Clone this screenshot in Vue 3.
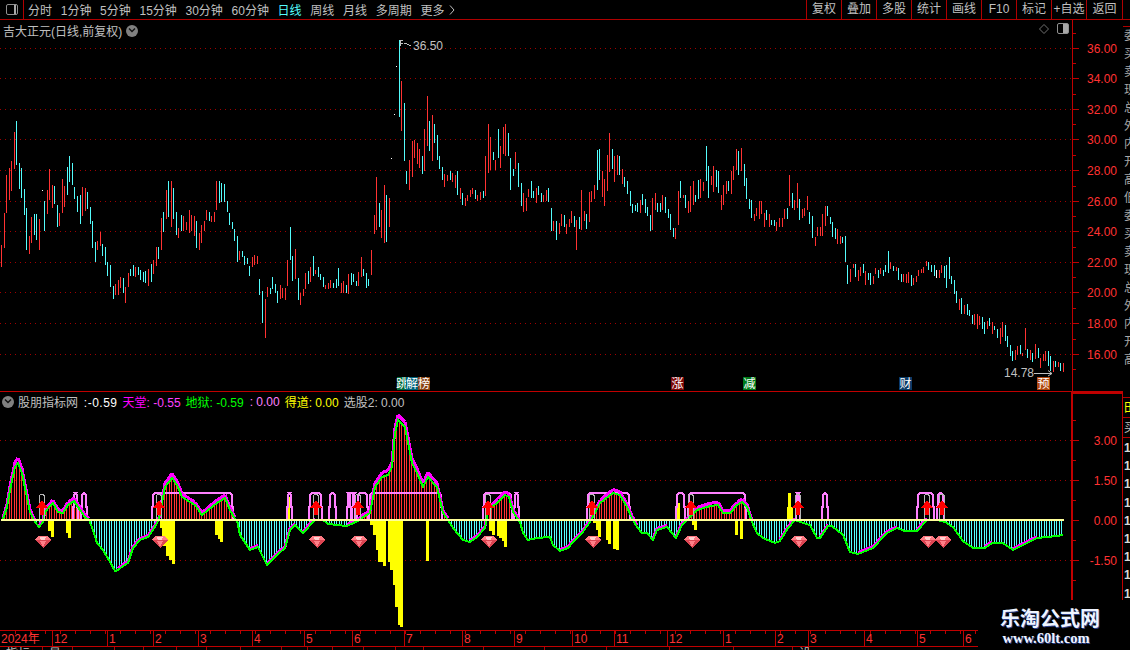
<template>
  <div class="terminal">
    <header class="toolbar">
      <div class="toggle-cell"><span class="panel-icon" /></div>
      <nav class="periods">
        <span v-for="p in periods" :key="p" :class="{ active: p === '日线' }">{{ p }}</span>
        <span class="more">更多 <svg width="6" height="10" viewBox="0 0 6 10"><path d="M1 0.5 L5 5 L1 9.5" fill="none" stroke="#c0c0c0" /></svg></span>
      </nav>
      <nav class="actions">
        <span v-for="a in actions" :key="a">{{ a }}</span>
      </nav>
    </header>

    <div class="workspace">
      <div class="charts">
        <section class="pane price-pane">
          <svg width="1123" height="372" viewBox="0 20 1123 372">
            <g shape-rendering="crispEdges">
              <line v-for="g in priceGrid" :key="g.y" x1="0" x2="1072" :y1="g.y + 0.5" :y2="g.y + 0.5" class="dots" />
              <path :d="barPath('r')" stroke="#ff3232" fill="none" />
              <path :d="barPath('c')" stroke="#54fcfc" fill="none" />
              <path :d="barPath('w')" stroke="#ffffff" fill="none" />
              <rect v-for="d in whiteDots" :key="d[0]" :x="d[0]" :y="d[1]" width="1" height="1" fill="#fff" />
              <line x1="1072.5" x2="1072.5" y1="20" y2="392" class="axis" />
              <line x1="0" x2="1123" y1="391.5" y2="391.5" class="axis" />
              <line v-for="g in priceGrid" :key="'t' + g.y" x1="1073" x2="1079" :y1="g.y + 0.5" :y2="g.y + 0.5" class="axis" />
              <line v-for="g in priceMinor" :key="'m' + g" x1="1073" x2="1076" :y1="g + 0.5" :y2="g + 0.5" class="axis" />
            </g>
            <text v-for="g in priceGrid" :key="'l' + g.y" x="1117" :y="g.y + 5" class="axis-label">{{ g.label }}</text>

            <path d="M400 46 V40 H403 M400 43 H403 M404 43 L407 44 L411 46" fill="none" stroke="#c0c0c0" shape-rendering="crispEdges" />
            <text x="413" y="50" class="note">36.50</text>
            <text x="1004" y="377" class="note">14.78</text>
            <path d="M1034 373.5 H1052 M1048 370.5 L1052 373.5 L1048 376" fill="none" stroke="#c0c0c0" />

            <g v-for="t in tags" :key="t.text + t.x">
              <rect :x="t.x" y="377" :width="t.w" height="13" :fill="t.bg" />
              <text :x="t.x + t.w / 2" y="388" class="tag">{{ t.text }}</text>
            </g>
          </svg>
          <div class="pane-title">
            <span>吉大正元(日线,前复权)</span>
            <span class="fold"><svg width="8" height="5" viewBox="0 0 8 5"><path d="M1 0.5 L4 3.5 L7 0.5" fill="none" stroke="#111" stroke-width="1.4" /></svg></span>
          </div>
          <div class="pane-tools">
            <svg width="10" height="10" viewBox="0 0 10 10"><path d="M5 0.5 L9.5 5 L5 9.5 L0.5 5 Z" fill="none" stroke="#707070" /></svg>
            <span class="panel-icon mirrored" />
          </div>
        </section>

        <section class="pane index-pane">
          <svg width="1123" height="238" viewBox="0 392 1123 238">
            <g shape-rendering="crispEdges">
              <line v-for="g in indexGrid" :key="g.y" x1="0" x2="1072" :y1="g.y + 0.5" :y2="g.y + 0.5" class="dots" />
              <rect v-for="(b, i) in yellowBars" :key="i" :x="b[0]" :y="Math.min(b[2], 520)" :width="b[1] - b[0]" :height="Math.abs(b[2] - 520)" fill="#ffff00" />
              <path :d="stickPath.up" stroke="#ff3232" fill="none" />
              <path :d="stickPath.down" stroke="#54fcfc" fill="none" />
              <polyline v-for="(d, i) in pillarLines" :key="i" :points="d" fill="none" stroke="#ff80ff" stroke-width="2" />
              <path :d="heavenPath" fill="none" stroke="#ff00ff" stroke-width="3" />
              <polyline :points="earthLine" fill="none" stroke="#00ff00" stroke-width="2" />
              <g v-for="x in signals" :key="'s' + x" :transform="`translate(${x} 0)`">
                <path d="M-2.5 519 V496 L-1 494 H1 L2.5 496 V519" fill="none" stroke="#b8b8b8" />
                <path d="M0 500 L6 508 H2 V515 H-2 V508 H-6 Z" fill="#ff0000" />
              </g>
              <rect x="1" y="519" width="1063" height="2" fill="#ffff99" />
              <line x1="1072" x2="1072" y1="392" y2="600" class="axis" stroke-width="2.5" />
              <line x1="1072" x2="1123" y1="393" y2="393" class="axis" stroke-width="2" />
              <line x1="1122.5" x2="1122.5" y1="392" y2="600" class="axis" stroke-width="2" />
              <line v-for="g in indexTicks" :key="'t' + g" x1="1073" x2="1079" :y1="g + 0.5" :y2="g + 0.5" class="axis" />
              <line v-for="g in indexMinor" :key="'m' + g" x1="1073" x2="1076" :y1="g + 0.5" :y2="g + 0.5" class="axis" />
            </g>
            <g v-for="x in signals" :key="'g' + x" :transform="`translate(${x + 1} 536)`" shape-rendering="crispEdges">
              <path d="M-5 0 H5 L8 4 L0 12 L-8 4 Z" fill="#dc4552" />
              <path d="M-5 0 H5 L8 4 H-8 Z" fill="#ff7a84" />
              <path d="M-3 1 H3 L2 4 H-2 Z" fill="#ffd0d0" />
              <path d="M-3 5 H3 L0 11 Z" fill="#ff8088" />
            </g>
            <text v-for="g in indexGrid" :key="'l' + g.y" x="1117" :y="g.y + 5" class="axis-label">{{ g.label }}</text>
            <text x="1117" y="525" class="axis-label">0.00</text>
          </svg>
          <div class="legend">
            <span class="fold"><svg width="8" height="5" viewBox="0 0 8 5"><path d="M1 0.5 L4 3.5 L7 0.5" fill="none" stroke="#111" stroke-width="1.4" /></svg></span>
            <span class="item grey">股朋指标网<b class="white first"> :-0.59</b></span>
            <span class="item magenta">天堂<b>: -0.55</b></span>
            <span class="item green">地狱<b>: -0.59</b></span>
            <span class="item pink"><b>: 0.00</b></span>
            <span class="item yellow">得道<b>: 0.00</b></span>
            <span class="item grey">选股2<b>: 0.00</b></span>
          </div>
        </section>
      </div>

      <aside class="side">
        <div class="side-gap" />
        <div class="side-quotes">
          <span v-for="(q, i) in sideWords" :key="i">{{ q }}</span>
        </div>
        <div class="side-box yellow">田</div>
        <div class="side-box">买</div>
        <div class="side-values">
          <span v-for="n in 9" :key="n">1</span>
        </div>
      </aside>
    </div>

    <svg class="dates" width="1130" height="17" viewBox="0 630 1130 17">
      <g shape-rendering="crispEdges">
        <line x1="0" x2="978" y1="630.5" y2="630.5" class="axis" />
        <line x1="0" x2="978" y1="646.5" y2="646.5" class="axis" />
        <line v-for="x in dateMinor" :key="x" :x1="x + 0.5" :x2="x + 0.5" y1="631" y2="634" class="axis" />
        <line v-for="m in months" :key="m.x" :x1="m.x + 0.5" :x2="m.x + 0.5" y1="631" y2="646" class="axis" />
      </g>
      <text x="1" y="643" class="date-label">2024年</text>
      <text v-for="m in months" :key="'d' + m.x" :x="m.x + 2" y="643" class="date-label">{{ m.label }}</text>
    </svg>

    <div class="tabs">
      <span v-for="t in tabs" :key="t.w" :style="{ width: t.w + 'px' }">{{ t.text }}</span>
    </div>

    <div class="watermark">
      <strong>乐淘公式网</strong>
      <em>www.60lt.com</em>
    </div>
  </div>
</template>

<script setup>
const periods = ['分时', '1分钟', '5分钟', '15分钟', '30分钟', '60分钟', '日线', '周线', '月线', '多周期']
const actions = ['复权', '叠加', '多股', '统计', '画线', 'F10', '标记', '+自选', '返回']

const priceYs = [48, 78, 109, 139, 170, 201, 231, 262, 292, 323, 354]
const priceGrid = priceYs.map((y, i) => ({ y, label: (36 - i * 2).toFixed(2) }))
const priceMinor = [33, ...priceYs.slice(0, -1).map((y, i) => Math.round((y + priceYs[i + 1]) / 2)), 369]

const indexGrid = [
  { y: 440, label: '3.00' },
  { y: 480, label: '1.50' },
  { y: 560, label: '-1.50' }
]
const indexTicks = [440, 480, 520, 560]
const indexMinor = [420, 460, 500, 540, 580]

const whiteDots = [[42, 190], [391, 158], [394, 114], [396, 66]]

const tags = [
  { text: '跳', x: 397, w: 10, bg: '#006a3c' },
  { text: '解', x: 406, w: 12, bg: '#00627a' },
  { text: '榜', x: 418, w: 12, bg: '#8a4212' },
  { text: '涨', x: 671, w: 13, bg: '#7c0808' },
  { text: '减', x: 743, w: 13, bg: '#007a1a' },
  { text: '财', x: 899, w: 13, bg: '#0a3a66' },
  { text: '预', x: 1037, w: 13, bg: '#b0470f' }
]

// 按截图读出的K线: 竖线位置,上沿,下沿,颜色 (坐标为放大3倍后的值)
const section = (ox, oy, text) =>
  text.trim().split(/\s+/).map((t) => {
    const [v, top, bottom, c] = t.split(',')
    return { x: Math.floor(ox + v / 3), top: Math.round(oy + top / 3), bottom: Math.round(oy + bottom / 3), c }
  })

const bars = [
  ...section(0, 100, `3,435,500,r 12,339,443,r 18,225,338,r 27,204,300,r 33,183,272,r 42,96,207,r 48,63,195,c 57,189,267,c 63,204,293,c 72,267,344,c
    78,324,450,c 87,408,462,r 93,351,429,r 102,342,405,c 108,342,420,c 117,357,450,r 132,303,393,c 141,270,342,r 147,207,300,r 156,255,324,r
    162,258,312,c 171,315,381,c 177,339,378,r 186,237,339,r 192,258,321,r 201,201,285,c 207,168,246,c 216,189,255,c 222,261,297,c 231,288,336,c
    240,285,372,c 246,261,348,r 255,264,333,r 261,276,327,c 270,321,372,c 276,363,444,c 285,426,486,c 291,423,450,r 300,396,438,r 306,432,468,c
    315,441,495,c 321,486,528,c 330,495,561,c 339,558,597,c 345,552,585,r 354,540,585,r 360,531,564,r 369,534,579,c 375,561,609,r 384,519,561,r
    390,507,528,c 399,495,528,c 405,501,531,r 414,501,525,c 420,510,540,c 429,516,546,c 435,513,549,c 444,507,558,r 453,492,546,c 459,480,522,r
    468,441,498,r 474,441,477,c 483,354,450,r 489,336,396,c 498,270,357,r 504,243,351,c 513,243,381,r 519,264,357,c 528,336,405,c 534,384,414,r
    543,345,393,c 549,348,393,r 558,366,390,r 567,330,399,r 573,345,393,r 582,348,408,r 588,363,444,c 597,399,450,r 603,375,429,r 612,363,393,r
    618,330,360,r 627,336,363,c 633,348,366,r 642,336,366,r 648,243,330,r 657,243,309,c 663,249,306,c 672,252,306,c 681,303,336,c 687,339,375,c
    696,366,387,c 702,387,423,c 711,408,486,c 717,453,480,r 726,453,471,c 732,468,495,c 741,474,492,c 747,498,528,c 756,471,501,r 762,465,495,r
    771,468,492,r 777,537,585,c 786,573,669,c 795,597,714,r 801,561,591,r 810,564,582,c 816,531,567,c 825,552,579,c 831,573,609,c 840,555,597,r
    846,564,594,r 855,564,600,r 861,480,558,r 870,381,480,c 876,468,543,c 885,447,537,r 894,534,600,c`),
  ...section(290, 220, `31,219,255,r 39,207,228,r 46,159,207,r 54,153,192,c 61,141,186,r 69,108,168,c 76,150,162,r 85,141,171,c 91,162,180,c 100,171,201,c
    106,195,207,r 115,189,207,r 121,180,204,r 130,189,204,c 139,177,204,c 145,144,198,c 154,189,219,r 160,183,219,r 169,195,219,c 175,162,222,r
    184,159,195,c 190,162,186,c 199,183,198,c 205,156,198,r 214,111,171,r 220,147,168,c 229,159,204,c 235,177,198,c`),
  ...section(350, 30, `64,660,735,r 72,555,612,r 79,441,600,r 87,519,591,c 94,540,624,r 102,465,639,r 109,495,636,c 118,504,591,r 148,30,261,c 154,153,303,r
    163,219,393,c 169,423,462,c 178,390,480,r 187,333,441,r 193,330,384,r 202,339,402,r 208,357,414,r 217,378,432,c 223,297,423,r 232,198,348,r
    238,273,363,c 247,255,393,r 253,282,339,c 262,315,390,c 268,378,417,c 277,411,450,c 283,432,471,r 292,435,453,r 301,423,450,c 307,429,456,r
    316,435,474,r 322,423,495,c 331,474,507,r 337,489,525,c 346,504,528,r 352,495,513,r 361,480,501,r 367,474,492,r 376,480,507,c 382,495,513,r
    391,486,510,r 400,483,504,c 406,378,498,r 415,282,429,r 421,321,420,r 430,366,390,c 436,390,420,r 445,297,384,c 451,348,414,r 460,291,372,r
    466,282,378,r 475,309,378,c 481,384,480,c 490,417,438,c 496,366,417,r 505,399,471,c 514,459,528,c 520,489,546,r 529,504,543,r 535,477,501,r
    544,453,504,c 550,483,504,c 559,474,519,r 565,468,495,c 574,489,516,c 580,495,516,r 589,480,513,r 595,474,516,c 604,534,603,c 610,573,603,r
    619,573,630,c 628,579,612,r 634,552,588,r 643,555,591,c 649,582,612,r 658,567,591,r 664,543,579,r 673,558,591,c 679,570,660,r 688,561,597,c
    694,480,600,r 703,543,573,r 709,552,597,c 718,486,576,r 724,483,516,r 733,465,507,r 742,360,480,c 748,357,450,c 757,423,501,r 763,447,528,r
    772,375,483,r 778,309,426,r 787,357,417,c 793,378,456,r 802,375,435,r 808,378,435,c 817,417,462,r 823,441,471,c 832,453,492,c 841,483,528,c
    847,522,549,c 856,525,543,c 862,519,546,c 871,510,549,r 877,492,525,c 886,507,549,c 892,531,558,c`),
  ...section(640, 130, `30,255,303,c 37,204,300,r 46,189,240,r 52,219,246,c 61,219,246,c 67,195,240,r 76,201,249,c 85,237,264,c 91,252,300,c 100,294,321,c
    106,294,327,r 115,183,285,r 121,153,204,c 130,195,204,r 136,195,234,c 145,213,249,r 151,168,246,r 160,153,225,r 166,195,216,c 175,150,207,c
    181,147,204,r 190,156,183,r 199,48,153,c 205,108,204,c 214,138,165,r 220,108,186,r 229,120,171,c 235,123,189,c 244,195,240,r 250,165,225,r
    259,153,192,r 265,153,183,c 274,123,192,r 280,108,150,r 289,57,120,r 295,63,135,c 304,54,123,r 313,102,168,c 319,144,207,c 328,207,237,c
    334,210,264,c 343,252,273,r 349,234,258,r 358,213,267,r 364,213,252,r 373,249,291,r 379,240,270,c 388,252,291,r 394,270,285,c 403,270,288,c
    409,276,303,r 418,264,291,r 427,264,291,r 433,237,267,r 442,234,267,c 448,135,228,r 457,189,234,c 463,210,240,r 472,159,234,r 478,207,270,c
    487,237,264,r 493,234,258,r 502,198,240,r 508,246,282,c 517,258,324,c 526,321,348,r 532,291,318,r 541,291,318,r 547,252,318,r 556,228,288,r
    562,228,258,c 571,261,282,c 577,276,321,c 586,294,327,c 592,297,342,r 601,318,342,r 607,321,339,c 616,318,396,c 622,405,462,c 631,417,456,r
    640,402,414,r 646,402,441,c 655,420,453,r 661,411,438,r 670,402,429,c 676,423,465,r 685,429,450,c 691,429,465,c 700,438,462,r 706,414,432,r
    715,420,444,c 721,414,432,r 730,420,438,c 736,405,426,c 745,363,429,c 751,396,417,r 760,408,423,c 769,411,423,r 775,414,450,c 784,432,456,c
    790,432,456,r 799,432,459,r 805,426,459,r 814,435,468,c 820,444,465,r 829,438,456,r 835,420,438,r 844,417,429,r 850,411,429,r 859,393,408,r
    865,396,420,c 874,405,426,c 883,405,438,c 889,420,444,w 898,420,444,r 904,405,429,r 913,408,444,c 919,405,474,c 928,381,447,c 934,438,462,c
    943,450,492,c 949,483,519,c 958,507,540,r 964,504,552,c 973,525,552,r 982,522,555,c 988,540,558,c 997,555,582,c 1003,552,585,r 1012,552,597,r
    1018,558,585,r 1027,561,597,c 1033,576,612,c 1042,573,597,r 1048,564,588,c 1057,576,612,r 1063,588,600,c 1072,597,624,c 1081,594,642,r 1087,576,621,r
    1096,585,633,c 1102,618,651,c 1111,645,678,c 1117,663,693,c 1126,660,690,r 1132,648,675,r 1141,645,672,c 1147,669,678,r 1156,594,660,r 1162,657,684,c
    1171,660,690,r 1177,669,696,c 1186,642,687,r 1195,654,684,c 1201,684,714,r 1210,672,693,r 1216,663,693,r 1225,663,708,c 1231,678,723,c 1240,693,726,r
    1246,693,711,c 1255,696,711,r 1261,699,723,c 1270,699,726,r`)
]

const barPath = (c) =>
  bars.filter((b) => b.c === c).map((b) => `M${b.x + 0.5} ${b.top}V${b.bottom}`).join('')

// 副图: 地狱线的关键点
const earth = [
  [1, 520], [3, 519], [7, 507], [10, 490], [15, 467], [18, 463], [22, 473], [25, 488], [30, 512], [35, 522], [39, 527], [43, 522], [45, 513], [48, 508],
  [53, 503], [58, 512], [63, 513], [68, 505], [74, 501], [80, 510], [85, 517], [89, 520], [93, 530], [97, 543], [103, 550], [110, 562], [115, 571],
  [118, 570], [123, 566], [128, 563], [133, 548], [140, 540], [148, 537], [153, 530], [157, 523], [159, 519], [162, 503], [165, 487], [172, 478],
  [177, 485], [182, 497], [190, 502], [195, 505], [202, 515], [208, 510], [217, 503], [225, 498], [230, 510], [235, 519], [237, 520], [240, 535],
  [250, 550], [258, 547], [267, 565], [277, 555], [285, 548], [290, 530], [295, 525], [303, 533], [315, 520], [323, 520], [328, 524], [347, 526],
  [358, 521], [363, 517], [370, 513], [375, 487], [382, 477], [388, 475], [392, 467], [395, 433], [398, 420], [405, 427], [412, 463], [417, 473],
  [423, 487], [428, 477], [437, 487], [443, 513], [448, 520], [453, 528], [463, 540], [470, 542], [477, 537], [485, 528], [488, 510], [492, 507],
  [498, 502], [505, 495], [509, 497], [513, 512], [520, 522], [523, 533], [528, 540], [537, 538], [550, 537], [553, 545], [560, 551], [568, 548],
  [573, 542], [582, 533], [590, 522], [595, 513], [600, 503], [613, 493], [620, 495], [627, 507], [632, 518], [637, 527], [642, 533], [647, 533],
  [653, 540], [657, 530], [667, 527], [676, 538], [682, 525], [687, 520], [697, 510], [710, 506], [718, 505], [723, 513], [730, 513], [737, 505],
  [742, 502], [747, 507], [752, 522], [757, 533], [763, 538], [775, 543], [780, 541], [788, 528], [795, 520], [800, 522], [810, 525], [817, 538],
  [820, 538], [828, 526], [832, 526], [843, 535], [850, 552], [858, 554], [873, 548], [887, 533], [897, 528], [905, 531], [917, 531], [927, 520],
  [937, 520], [945, 522], [953, 527], [963, 541], [973, 548], [985, 548], [992, 543], [1003, 543], [1013, 550], [1027, 543], [1037, 538], [1057, 536], [1063, 535]
]

const earthAt = (x) => {
  const i = earth.findIndex((p) => p[0] >= x)
  if (i <= 0) return earth[Math.max(i, 0)][1]
  const [x0, y0] = earth[i - 1]
  const [x1, y1] = earth[i]
  return y0 + ((y1 - y0) * (x - x0)) / (x1 - x0)
}

const earthLine = earth.map((p) => p.join(',')).join(' ')

// 天堂线只在上穿和水上时露出来
const lift = (y) => (y < 519 ? Math.min(5, 2 + (520 - y) / 18) : 1.5)
const heavenPath = earth
  .slice(1)
  .map(([x, y], i) => {
    const [px, py] = earth[i]
    const show = y < 519 || py < 519 || y < py - 2
    return show ? `M${px} ${py - lift(py)}L${x} ${y - lift(y)}` : ''
  })
  .join('')

const stickXs = Array.from({ length: 425 }, (_, i) => 1 + Math.ceil(2.5 * i))
const stickPath = { up: '', down: '' }
stickXs.forEach((x) => {
  const y = Math.round(earthAt(x))
  if (y < 519) stickPath.up += `M${x + 0.5} ${y}V520`
  else if (y > 521) stickPath.down += `M${x + 0.5} 520V${y}`
})

const yellowBars = [
  [48, 51, 531], [51, 54, 537], [66, 69, 533], [68, 71, 538], [160, 162, 528], [162, 166, 546], [166, 169, 556], [169, 172, 560], [172, 175, 564],
  [215, 218, 535], [218, 220, 539], [220, 223, 542], [370, 373, 525], [373, 376, 535], [376, 378, 550], [378, 383, 562], [383, 386, 566],
  [388, 390, 562], [390, 393, 570], [393, 395, 585], [395, 398, 607], [398, 400, 625], [400, 403, 627], [426, 429, 561], [489, 492, 531],
  [492, 495, 535], [497, 499, 536], [499, 502, 538], [502, 504, 541], [504, 507, 547], [593, 596, 523], [596, 598, 530], [598, 601, 537],
  [606, 608, 540], [608, 611, 544], [613, 616, 549], [616, 619, 550], [692, 694, 525], [694, 697, 530], [735, 738, 535], [740, 743, 539],
  [287, 290, 497], [589, 591, 510], [677, 680, 503], [787, 793, 507], [788, 791, 493], [1, 6, 519]
]

const pillar = (x0, x1) =>
  `${x0},520 ${x0},507 ${x0 + 1},507 ${x0 + 1},495 ${x0 + 3},493 ${x1 - 3},493 ${x1 - 1},495 ${x1 - 1},507 ${x1},507 ${x1},520`

const pillarLines = [
  [73, 78], [81, 87], [152, 233], [287, 292], [309, 322], [329, 336], [347, 351], [352, 355], [357, 368], [369, 442], [483, 512], [514, 519],
  [587, 630], [676, 685], [688, 746], [796, 800], [822, 828], [917, 934], [937, 944]
].map(([a, b]) => pillar(a, b))

const signals = [42, 159, 316, 358, 488, 592, 691, 798, 927, 942]

const months = [
  { x: 52, label: '12' }, { x: 107, label: '1' }, { x: 153, label: '2' }, { x: 198, label: '3' }, { x: 252, label: '4' }, { x: 304, label: '5' },
  { x: 352, label: '6' }, { x: 404, label: '7' }, { x: 462, label: '8' }, { x: 514, label: '9' }, { x: 572, label: '10' }, { x: 614, label: '11' },
  { x: 667, label: '12' }, { x: 723, label: '1' }, { x: 775, label: '2' }, { x: 808, label: '3' }, { x: 864, label: '4' }, { x: 917, label: '5' }, { x: 963, label: '6' }
]
const dateMinor = Array.from({ length: 65 }, (_, i) => 15 + i * 15)

const tabs = [
  { text: '指标', w: 43 }, { text: '量', w: 30 }, { text: '', w: 42 }, { text: '', w: 29 }, { text: '', w: 33 }, { text: '', w: 30 }, { text: '', w: 34 },
  { text: '', w: 41 }, { text: '', w: 26 }, { text: '', w: 25 }, { text: '', w: 31 }, { text: '', w: 32 }, { text: '', w: 28 },
  { text: '', w: 60 }, { text: '', w: 61 }, { text: '', w: 62 }, { text: '', w: 63 }, { text: '', w: 64 }, { text: '', w: 59 }, { text: '设置', w: 16 }
]

const sideWords = Array.from({ length: 19 }, (_, i) => ['委', '买', '卖', '现', '总', '外', '内', '开', '高', '低'][i % 10])
</script>

<style scoped>
.terminal {
  position: relative;
  display: flex;
  flex-direction: column;
  width: 1130px;
  height: 650px;
  overflow: hidden;
  background: #000;
  color: #c0c0c0;
  font: 12px "Liberation Sans", "Noto Sans CJK SC", sans-serif;
}

.toolbar {
  display: flex;
  align-items: center;
  height: 20px;
  flex: none;
  border-bottom: 1px solid #b00000;
  box-sizing: border-box;
}

.toggle-cell {
  display: flex;
  align-items: center;
  justify-content: center;
  width: 23px;
  height: 19px;
  border-right: 1px solid #b00000;
  box-sizing: content-box;
}

.panel-icon {
  display: block;
  box-sizing: border-box;
  width: 12px;
  height: 11px;
  border: 1px solid #909090;
  border-radius: 2px;
  background: linear-gradient(to right, #000 0 2px, #000 2px 7px, #a8a8a8 7px 9px, #000 9px);
}

.panel-icon.mirrored {
  background: linear-gradient(to right, #000 0 5px, #a8a8a8 5px);
}

.periods {
  display: flex;
  gap: 8.7px;
  margin-left: 4px;
}

.periods .active {
  color: #54fcfc;
}

.more svg {
  margin-left: 1px;
}

.actions {
  display: flex;
  margin-left: auto;
  margin-right: 7px;
  border-right: 1px solid #b00000;
}

.actions span {
  width: 35px;
  height: 19px;
  line-height: 18px;
  text-align: center;
  border-left: 1px solid #b00000;
  box-sizing: border-box;
}

.actions span:last-child {
  width: 36px;
}

.workspace {
  display: flex;
  height: 610px;
  flex: none;
}

.charts {
  display: flex;
  flex-direction: column;
  width: 1123px;
  flex: none;
}

.pane {
  position: relative;
}

.pane svg {
  display: block;
}

.price-pane {
  height: 372px;
}

.index-pane {
  height: 238px;
}

.dots {
  stroke: #a00000;
  stroke-dasharray: 1 4;
}

.axis {
  stroke: #c00000;
}

.axis-label {
  fill: #ff3232;
  font-size: 12px;
  text-anchor: end;
}

.note {
  fill: #c0c0c0;
  font-size: 12px;
}

.tag {
  fill: #fff;
  font-size: 12px;
  text-anchor: middle;
}

.pane-title {
  position: absolute;
  top: 2px;
  left: 3px;
  display: flex;
  align-items: center;
  gap: 4px;
}

.fold {
  display: inline-flex;
  align-items: center;
  justify-content: center;
  width: 12px;
  height: 12px;
  border-radius: 50%;
  background: #808080;
}

.pane-tools {
  position: absolute;
  top: 3px;
  left: 1039px;
  display: flex;
  align-items: center;
  gap: 8px;
}

.legend {
  position: absolute;
  top: 1px;
  left: 2px;
  display: flex;
  align-items: center;
  gap: 5px;
}

.legend b {
  font-weight: 400;
}

.legend b.first {
  padding-left: 2px;
  letter-spacing: 0.5px;
}

.legend .pink {
  padding-left: 1px;
}

.legend .fold {
  margin-right: -1px;
}

.white {
  color: #fff;
}

.grey {
  color: #c0c0c0;
}

.magenta {
  color: #ff00ff;
}

.magenta b {
  color: #ff40ff;
}

.green {
  color: #00ff00;
}

.pink {
  color: #ff80ff;
}

.yellow {
  color: #ffff00;
}

.side {
  display: flex;
  flex-direction: column;
  width: 7px;
  flex: none;
  overflow: hidden;
  white-space: nowrap;
}

.side-gap {
  height: 7px;
  flex: none;
  border-bottom: 1px solid #b00000;
  box-sizing: border-box;
}

.side-quotes {
  display: flex;
  flex-direction: column;
  height: 370px;
  flex: none;
  padding-left: 1px;
}

.side-quotes span {
  height: 18px;
  line-height: 18px;
  flex: none;
  color: #a8a8a8;
}

.side-box {
  height: 20px;
  line-height: 20px;
  flex: none;
  padding-left: 1px;
  border-top: 1px solid #b00000;
  box-sizing: border-box;
}

.side-values {
  display: flex;
  flex-direction: column;
  border-top: 1px solid #b00000;
  padding: 1px 0 0 1px;
}

.side-values span {
  height: 18.2px;
  line-height: 18px;
  flex: none;
  font-weight: 700;
  color: #d8d8d8;
}

.dates {
  display: block;
  flex: none;
}

.date-label {
  fill: #ff3232;
  font-size: 12px;
}

.tabs {
  display: flex;
  height: 3px;
  overflow: hidden;
  color: #c0c0c0;
}

.tabs span {
  flex: none;
  box-sizing: border-box;
  padding-left: 6px;
  border-right: 1px solid #b00000;
  line-height: 14px;
}

.watermark {
  position: absolute;
  left: 978px;
  top: 600px;
  right: 0;
  bottom: 0;
  display: flex;
  flex-direction: column;
  align-items: center;
  padding: 6px 8px 0 0;
  box-sizing: border-box;
  background: #000;
}

.watermark strong {
  font: 700 20px/24px "Noto Sans CJK SC", sans-serif;
  color: #eef4ff;
  text-shadow: 1px 1px 0 #2a3f8a;
}

.watermark em {
  margin-right: 8px;
  font: 700 14.5px/16px "Liberation Serif", serif;
  color: #eef4ff;
  text-shadow: 1px 1px 0 #2a3f8a;
}
</style>

<style>
html,
body {
  background: #000;
}
</style>
